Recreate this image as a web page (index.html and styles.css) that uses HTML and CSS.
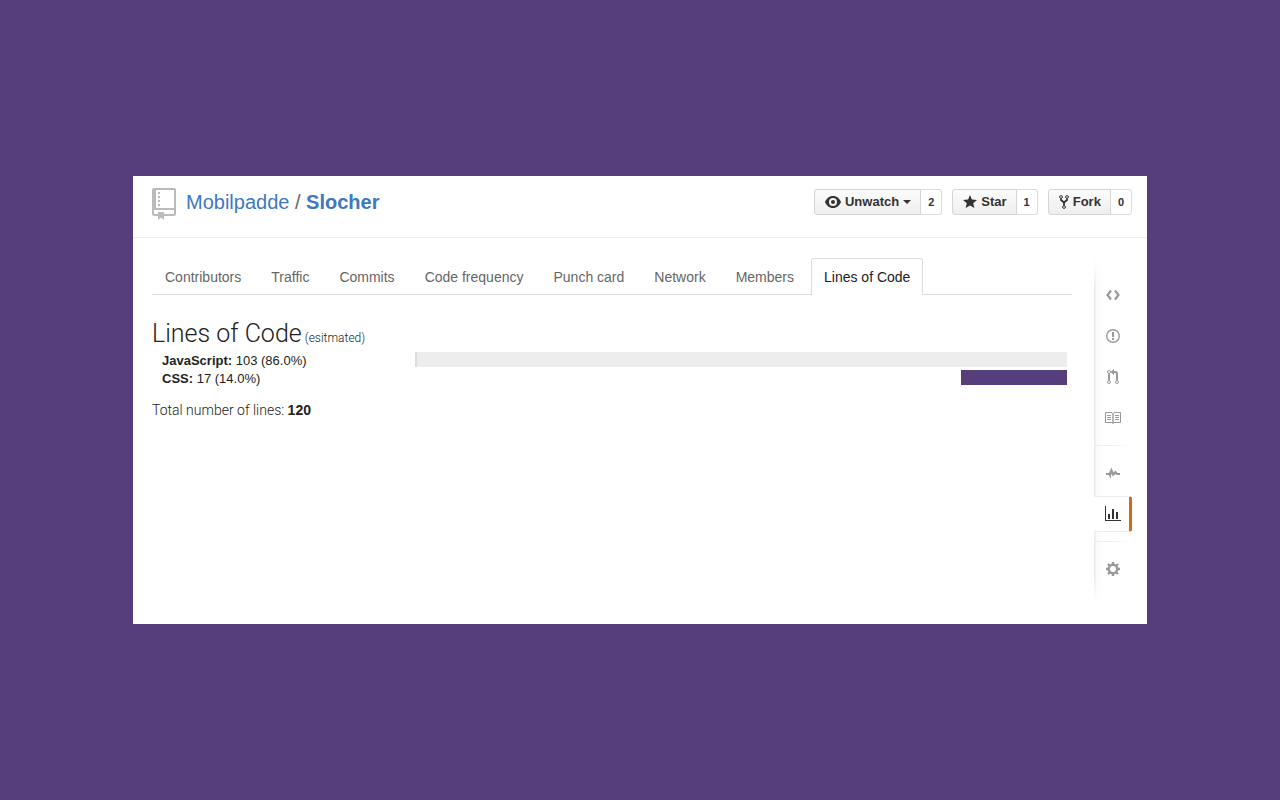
FILE: index.html
```html
<!DOCTYPE html>
<html lang="en">
<head>
<meta charset="utf-8">
<title>Mobilpadde / Slocher</title>
<link rel="stylesheet" href="styles.css">
</head>
<body>
<main class="card">
  <header class="head">
    <svg class="repo-icon" width="24" height="32" viewBox="0 0 24 32" aria-hidden="true">
      <path fill="#bbb" fill-rule="evenodd" d="M2 0H22Q24 0 24 2V26Q24 28 22 28H12V32L9 29.500L6 32V28H2Q0 28 0 26V2Q0 0 2 0ZM4 2V20H22V2ZM2 22V26H6V24H12V26H22V22ZM6 4H8V6H6ZM6 8H8V10H6ZM6 12H8V14H6ZM6 16H8V18H6Z"/>
    </svg>
    <h1 class="title"><a href="#">Mobilpadde</a> <span>/</span> <a class="repo" href="#">Slocher</a></h1>
    <div class="actions">
      <div class="action"><button class="btn" type="button">
        <svg width="16" height="12" viewBox="0 0 16 12" aria-hidden="true"><path fill="#333" fill-rule="evenodd" d="M8 0C4 0 1.300 2.700 0 6C1.300 9.300 4 12 8 12S14.700 9.300 16 6C14.700 2.700 12 0 8 0ZM8 2A4 4 0 0 1 8 10A4 4 0 0 1 8 2Z"/><circle cx="8" cy="6" r="2" fill="#333"/></svg>
        <span>Unwatch</span><svg width="8" height="4" viewBox="0 0 8 4" aria-hidden="true"><path fill="#333" d="M0 0H8L4 4Z"/></svg></button><a class="count" href="#">2</a></div>
      <div class="action"><button class="btn" type="button">
        <svg width="14" height="14" viewBox="0 0 14 14" aria-hidden="true"><path fill="#333" d="M7 0L8.900 4.600L14 5L10.200 8.200L11.400 13L7 10.400L2.600 13L3.800 8.200L0 5L5.100 4.600Z"/></svg>
        <span>Star</span></button><a class="count" href="#">1</a></div>
      <div class="action"><button class="btn" type="button">
        <svg width="10" height="14" viewBox="0 0 10 14" fill="none" stroke="#333" aria-hidden="true"><circle cx="2" cy="2" r="1.400"/><circle cx="8" cy="2" r="1.400"/><circle cx="5" cy="12" r="1.400"/><path stroke-width="1.800" d="M2 3.500V5L5 7.500V10.500M8 3.500V5L5 7.500"/></svg>
        <span>Fork</span></button><a class="count" href="#">0</a></div>
    </div>
  </header>
  <div class="body">
    <section class="content">
      <nav class="tabs">
        <a href="#">Contributors</a><a href="#">Traffic</a><a href="#">Commits</a><a href="#">Code frequency</a><a href="#">Punch card</a><a href="#">Network</a><a href="#">Members</a><a class="active" href="#">Lines of Code</a>
      </nav>
      <h2 class="heading">Lines of Code <small>(esitmated)</small></h2>
      <ul class="langs">
        <li><span class="lang"><b>JavaScript:</b> 103 (86.0%)</span><span class="track"><span class="bar js" style="width:100%"></span></span></li>
        <li><span class="lang"><b>CSS:</b> 17 (14.0%)</span><span class="track"><span class="bar css" style="width:16.3%"></span></span></li>
      </ul>
      <p class="total">Total number of lines: <b>120</b></p>
    </section>
    <nav class="side" aria-label="Repository">
      <div class="group">
        <a href="#" aria-label="Code"><svg width="16" height="16" viewBox="0 0 16 16" fill="none" stroke="#999" stroke-width="2.200"><path d="M6 3.500L2.500 8L6 12.500M10 3.500L13.500 8L10 12.500"/></svg></a>
        <a href="#" aria-label="Issues"><svg width="16" height="16" viewBox="0 0 16 16"><circle cx="8" cy="8" r="6.300" fill="none" stroke="#999" stroke-width="1.400"/><path fill="#999" d="M7 4H9V9H7ZM7 10H9V12H7Z"/></svg></a>
        <a href="#" aria-label="Pull requests"><svg width="16" height="16" viewBox="0 0 16 16" fill="none" stroke="#999"><circle cx="4" cy="3" r="1.500"/><circle cx="4" cy="13" r="1.500"/><circle cx="12" cy="13" r="1.500"/><path stroke-width="2" d="M4 5V11M8 3H10Q12 3 12 5V11"/><path fill="#999" stroke="none" d="M5.500 3L9 0V6Z"/></svg></a>
        <a href="#" aria-label="Wiki"><svg width="16" height="16" viewBox="0 0 16 16" fill="none" stroke="#999"><path d="M.5 2.500H7L8 3.500L9 2.500H15.500V12.500H9L8 13.500L7 12.500H.5ZM2 5.500H6M2 7.500H6M2 9.500H6M10 5.500H14M10 7.500H14M10 9.500H14"/><path stroke-width="1.400" d="M8 3.500V13.500"/></svg></a>
      </div>
      <div class="group">
        <a href="#" aria-label="Pulse"><svg width="16" height="16" viewBox="0 0 16 16"><path fill="#999" d="M1 8H4L6.500 2.500L8.500 7.500L10.500 5.500L12.500 8H15V10H11.500L10.500 9L7.800 11.500L6.500 8.500L5.500 14L4 10H1Z"/></svg></a>
        <a class="current" href="#" aria-label="Graphs"><svg width="16" height="16" viewBox="0 0 16 16"><path fill="#333" d="M0 0H1V14H16V15H0ZM3 8H5V13H3ZM7 3H9V13H7ZM11 6H13V13H11Z"/></svg></a>
      </div>
      <div class="group">
        <a href="#" aria-label="Settings"><svg width="16" height="16" viewBox="0 0 16 16" fill="none" stroke="#999"><circle cx="8" cy="8" r="4.200" stroke-width="2.400"/><path stroke-width="2.400" d="M8 1V4M8 12V15M1 8H4M12 8H15M3 3L5 5M11 11L13 13M13 3L11 5M5 11L3 13"/></svg></a>
      </div>
    </nav>
  </div>
</main>
</body>
</html>
```
FILE: styles.css
```css
* { box-sizing: border-box; }
body {
  margin: 0;
  min-height: 100vh;
  padding: 24px 133px;
  display: flex;
  align-items: center;
  background: #563d7c;
  color: #333;
  font: 13px/18px "Liberation Sans", Arial, sans-serif;
}
a { color: inherit; text-decoration: none; }
svg { display: block; flex: none; }
.card { flex: 1; background: #fff; }
.head {
  display: flex;
  align-items: center;
  gap: 10px;
  height: 62px;
  padding: 0 15px 9px 19px;
  border-bottom: 1px solid #eee;
}
.repo-icon { margin-top: 4px; }
.title { margin: 0; flex: 1; font-size: 20px; line-height: 28px; font-weight: 400; }
.title a { color: #4078c0; }
.title .repo { font-weight: 700; }
.title span { color: #666; }
.actions { display: flex; gap: 10px; }
.action { display: flex; height: 26px; font-weight: 700; }
.btn {
  display: flex;
  align-items: center;
  gap: 4px;
  padding: 0 9px 0 10px;
  border: 1px solid #d5d5d5;
  border-radius: 3px 0 0 3px;
  background: linear-gradient(#fcfcfc, #eee);
  color: #333;
  font: inherit;
}
.count {
  padding: 0 7px;
  border: 1px solid #ddd;
  border-left: 0;
  border-radius: 0 3px 3px 0;
  font-size: 11px;
  line-height: 24px;
}
.body { display: flex; gap: 22px; padding: 20px 15px 19px 19px; }
.content { flex: 1; min-width: 0; }
.tabs { display: flex; gap: 4px; border-bottom: 1px solid #ddd; }
.tabs a {
  padding: 8px 12px;
  border: 1px solid transparent;
  border-bottom: 0;
  margin-bottom: -1px;
  color: #666;
  font-size: 14px;
  line-height: 20px;
}
.tabs .active { border-color: #ddd; border-radius: 3px 3px 0 0; background: #fff; color: #222; }
.heading { margin: 25px 0 0; color: #222; font: 300 25px/27px Roboto, "Liberation Sans", sans-serif; }
.heading small { margin-left: -3px; font-size: 12px; }
.langs { margin: 0; padding: 0 5px 0 10px; list-style: none; color: #222; }
.langs li { display: flex; align-items: flex-start; }
.lang { width: 253px; }
.track { flex: 1; display: flex; justify-content: flex-end; }
.bar { height: 15px; }
.js { background: #ededed; border-left: 2px solid #ddd; }
.css { background: #563d7c; }
.total { margin: 12px 0 0; color: #222; font: 300 14px/20px Roboto, "Liberation Sans", sans-serif; }
.total b { font-family: "Liberation Sans", sans-serif; font-weight: 700; }
.side {
  width: 38px;
  padding: 19px 0 18px;
  background: linear-gradient(#fff, transparent 30px, transparent calc(100% - 30px), #fff), linear-gradient(90deg, #ebebeb 0 1px, #f9f9f9 2px, #fff 10px);
}
.group + .group { margin-top: 9px; padding-top: 10px; background: linear-gradient(90deg, #eee 50%, transparent 90%) top / 100% 1px no-repeat; }
.group a { display: flex; align-items: center; justify-content: center; height: 36px; }
.group a + a { margin-top: 5px; }
.group .current { background: #fff; border: 1px solid #eee; border-left: 0; border-right: 3px solid #d26911; border-radius: 0 3px 3px 0; padding-left: 3px; }
```
